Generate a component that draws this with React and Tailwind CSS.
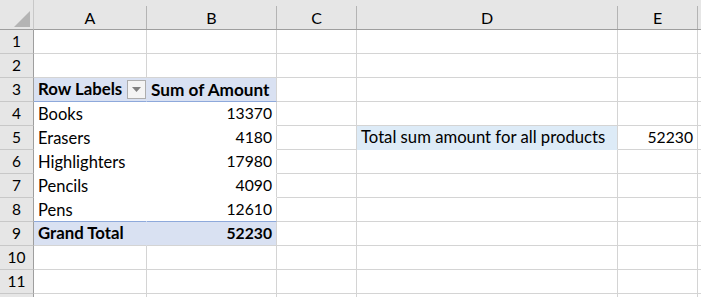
import React from "react";

const cols = ["A", "B", "C", "D", "E"];

function ColHead({ label, last }) {
  return (
    <div className="bg-[#e6e6e6] border-b border-b-[#9e9e9e] pt-[6px]">
      <div
        className={
          "h-full flex items-center justify-center text-black text-[16px] " +
          (last ? "" : "border-r border-r-[#b4b4b4]")
        }
      >
        {label}
      </div>
    </div>
  );
}

function RowHead({ n }) {
  return (
    <div className="bg-[#e6e6e6] border-r border-r-[#9e9e9e] border-b border-b-[#c8c8c8] flex items-end justify-center pb-[4px] text-black text-[15.5px]">
      {n}
    </div>
  );
}

function Cell({ children, className = "" }) {
  return (
    <div
      className={
        "flex items-end pb-[3px] px-[4px] whitespace-nowrap overflow-visible text-black border-r border-b " +
        className
      }
    >
      {children}
    </div>
  );
}

const plain = "border-[#d4d4d4]";
const word = "text-[16.5px]";
const num = "text-[15.7px] justify-end";

export default function App() {
  const rows = [];
  const items = [
    ["Books", "13370"],
    ["Erasers", "4180"],
    ["Highlighters", "17980"],
    ["Pencils", "4090"],
    ["Pens", "12610"],
  ];

  for (let r = 1; r <= 11; r++) {
    const cells = [<RowHead key="h" n={r} />];
    if (r === 3) {
      cells.push(
        <Cell key="a" className="bg-[#d9e1f2] border-r-[#d9e1f2] border-b-[#8ea9db] justify-between pr-[0px] font-bold text-[16.8px]">
          <span>Row Labels</span>
          <span className="mb-[-1px] w-[19px] h-[19px] border border-[#adadad] bg-[#f4f4f4] flex items-center justify-center">
            <svg width="9" height="5" viewBox="0 0 9 5">
              <polygon points="0,0 9,0 4.5,5" fill="#808080" />
            </svg>
          </span>
        </Cell>,
        <Cell key="b" className="bg-[#d9e1f2] border-b-[#8ea9db] border-r-[#d4d4d4] font-bold text-[17.2px]">
          Sum of Amount
        </Cell>
      );
    } else if (r >= 4 && r <= 8) {
      const [name, val] = items[r - 4];
      const bb = r === 8 ? "border-b-[#8ea9db]" : "border-b-transparent";
      cells.push(
        <Cell key="a" className={"border-r-transparent " + bb + " " + word}>{name}</Cell>,
        <Cell key="b" className={"border-r-[#d4d4d4] " + bb + " " + num}>{val}</Cell>
      );
    } else if (r === 9) {
      cells.push(
        <Cell key="a" className="bg-[#d9e1f2] border-b-[#d4d4d4] border-r-[#d9e1f2] font-bold text-[16.8px]">Grand Total</Cell>,
        <Cell key="b" className={"bg-[#d9e1f2] border-b-[#d4d4d4] border-r-[#d4d4d4] font-bold " + num}>
          52230
        </Cell>
      );
    } else {
      cells.push(<Cell key="a" className={plain} />, <Cell key="b" className={plain} />);
    }
    cells.push(<Cell key="c" className={plain} />);
    if (r === 5) {
      cells.push(
        <Cell key="d" className={"bg-[#ddebf7] border-r-[#d4d4d4] border-b-[#ddebf7] text-[16.7px]"}>
          Total sum amount for all products
        </Cell>,
        <Cell key="e" className={plain + " " + num}>52230</Cell>
      );
    } else {
      cells.push(<Cell key="d" className={plain} />, <Cell key="e" className={plain} />);
    }
    cells.push(<Cell key="f" className="border-r-transparent border-b-[#d4d4d4]" />);
    rows.push(...cells.map((c, i) => React.cloneElement(c, { key: r + "-" + i })));
  }

  return (
    <div className="w-[701px] h-[297px] overflow-hidden bg-white font-['Lato',sans-serif] leading-none">
      <div className="grid grid-cols-[34px_113px_130px_80px_261px_80px_1fr] grid-rows-[30px_repeat(11,24px)_1fr] h-[297px]">
        <div className="bg-[#e6e6e6] border-b border-b-[#9e9e9e] border-r border-r-[#c8c8c8]">
          <svg width="33" height="29" viewBox="0 0 33 29" className="block">
            <polygon points="14,27 30,27 30,11" fill="#b4b4b4" />
          </svg>
        </div>
        {cols.map((c) => (
          <ColHead key={c} label={c} />
        ))}
        <ColHead label="" last />
        {rows}
        <div className="bg-[#e6e6e6] border-r border-r-[#9e9e9e]" />
        <div className="border-r border-[#d4d4d4]" />
        <div className="border-r border-[#d4d4d4]" />
        <div className="border-r border-[#d4d4d4]" />
        <div className="border-r border-[#d4d4d4]" />
        <div className="border-r border-[#d4d4d4]" />
        <div />
      </div>
    </div>
  );
}
